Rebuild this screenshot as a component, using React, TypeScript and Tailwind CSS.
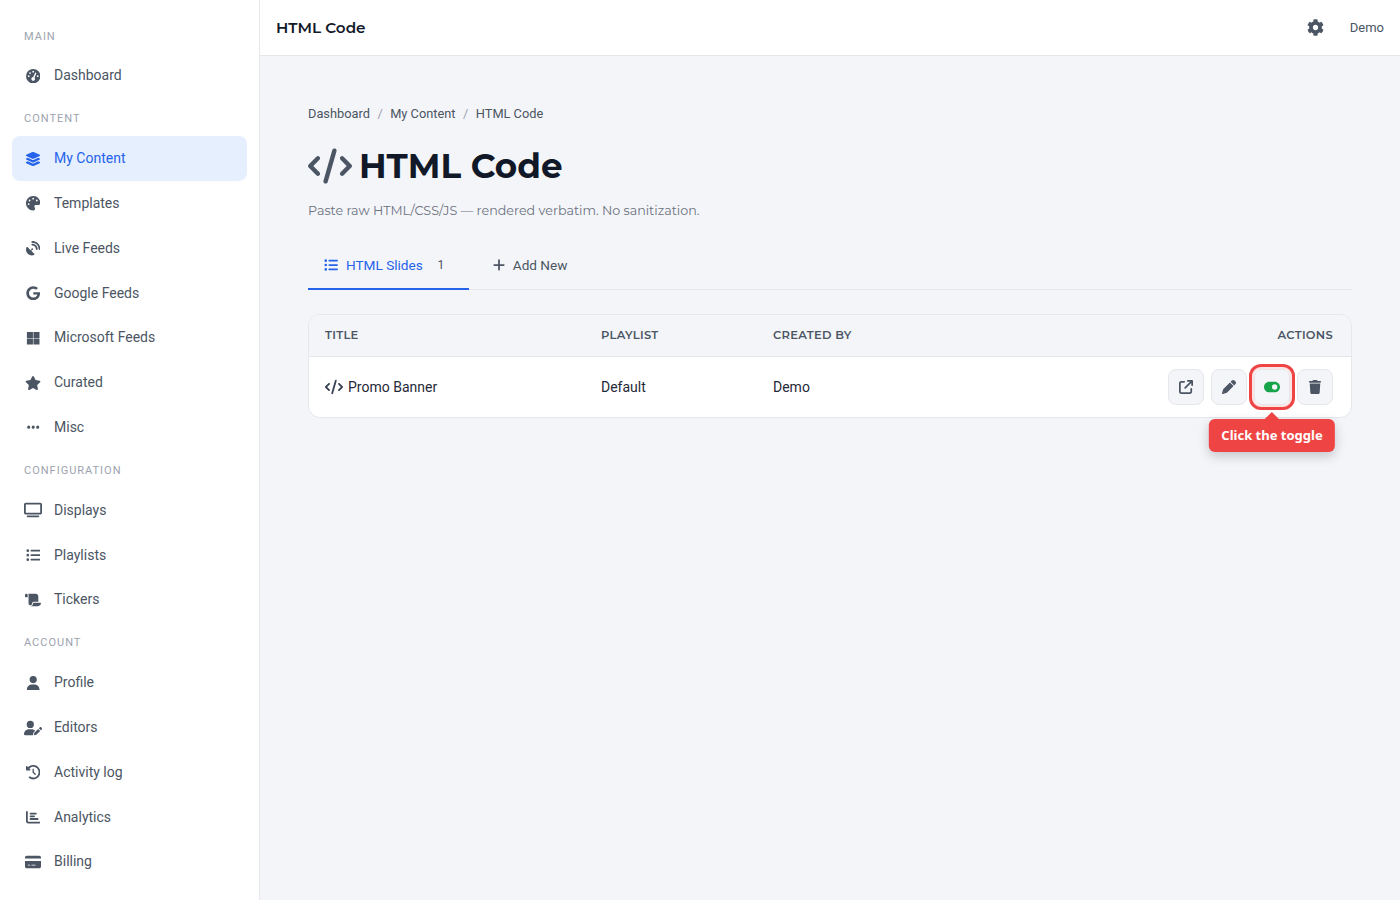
import { ReactNode } from 'react'
import { IconType } from 'react-icons'
import { FaCog } from 'react-icons/fa'
import {
  FaArrowUpRightFromSquare,
  FaChartBar,
  FaCircleQuestion,
  FaClockRotateLeft,
  FaCode,
  FaCreditCard,
  FaEllipsis,
  FaGaugeHigh,
  FaGoogle,
  FaLayerGroup,
  FaListUl,
  FaMicrosoft,
  FaPalette,
  FaPen,
  FaPlus,
  FaSatelliteDish,
  FaScroll,
  FaStar,
  FaToggleOn,
  FaTrash,
  FaTv,
  FaUser,
  FaUserPen,
} from 'react-icons/fa6'

const heading = "font-['Montserrat','Inter','Liberation_Sans',sans-serif]"

// size: react-icons fits wide glyphs into a 1em box, so wide ones get more
type NavItem = { label: string; icon: IconType; size?: number; active?: boolean }

const nav: { title: string; items: NavItem[] }[] = [
  { title: 'Main', items: [{ label: 'Dashboard', icon: FaGaugeHigh }] },
  {
    title: 'Content',
    items: [
      { label: 'My Content', icon: FaLayerGroup, size: 16, active: true },
      { label: 'Templates', icon: FaPalette },
      { label: 'Live Feeds', icon: FaSatelliteDish },
      { label: 'Google Feeds', icon: FaGoogle },
      { label: 'Microsoft Feeds', icon: FaMicrosoft },
      { label: 'Curated', icon: FaStar, size: 16 },
      { label: 'Misc', icon: FaEllipsis },
    ],
  },
  {
    title: 'Configuration',
    items: [
      { label: 'Displays', icon: FaTv, size: 18 },
      { label: 'Playlists', icon: FaListUl },
      { label: 'Tickers', icon: FaScroll, size: 16 },
    ],
  },
  {
    title: 'Account',
    items: [
      { label: 'Profile', icon: FaUser },
      { label: 'Editors', icon: FaUserPen, size: 18 },
      { label: 'Activity log', icon: FaClockRotateLeft },
      { label: 'Analytics', icon: FaChartBar },
      { label: 'Billing', icon: FaCreditCard, size: 16 },
      // next row is cut by the window, only the top of its icon shows
      { label: '', icon: FaCircleQuestion },
    ],
  },
]

function Sidebar() {
  return (
    <aside className="w-[260px] shrink-0 h-screen overflow-hidden bg-white border-r border-[#e5e7eb] px-3 pt-[15.6px]">
      {nav.map((section) => (
        <div key={section.title}>
          <div className="pl-3 pt-3 pb-2 h-[38px] text-[11px] leading-[18px] uppercase tracking-[1px] text-[#9ca3af]">
            {section.title}
          </div>
          {section.items.map((item) => (
            <div
              key={item.label}
              className={`flex items-center h-[44.8px] w-[235px] rounded-lg px-3 text-[14px] ${
                item.active ? 'bg-[#e6effe] text-[#2563eb]' : 'text-[#4b5563]'
              }`}
            >
              <span className="w-[18px] mr-3 flex justify-center">
                <item.icon size={item.size ?? 14.4} />
              </span>
              {item.label}
            </div>
          ))}
        </div>
      ))}
    </aside>
  )
}

function Topbar() {
  return (
    <header className="h-14 shrink-0 bg-white border-b border-[#e5e7eb] flex items-center justify-between pl-4 pr-4">
      <div className={`${heading} pt-0.5 text-[15.2px] font-semibold text-[#111827]`}>HTML Code</div>
      <div className="flex items-center gap-[26px]">
        <FaCog size={17} className="text-[#4b5563]" />
        <span className="text-[13px] text-[#4b5563]">Demo</span>
      </div>
    </header>
  )
}

function ActionButton({ children }: { children: ReactNode }) {
  return (
    <button className="w-9 h-9 flex items-center justify-center rounded-lg border border-[#e5e7eb] bg-[#f4f5f9] text-[#4b5563]">
      {children}
    </button>
  )
}

function Table() {
  const headCell = `${heading} text-[11.5px] font-semibold uppercase tracking-[0.3px] text-[#4b5563]`
  return (
    <div className="mt-6 bg-white border border-[#e5e7eb] rounded-xl">
      <div className="h-[42px] flex items-center px-4 bg-[#f4f5f9] border-b border-[#e5e7eb] rounded-t-xl">
        <div className={`w-[276px] ${headCell}`}>Title</div>
        <div className={`w-[172px] ${headCell}`}>Playlist</div>
        <div className={`flex-1 ${headCell}`}>Created by</div>
        <div className={`pr-0.5 ${headCell}`}>Actions</div>
      </div>
      <div className="h-[60px] flex items-center px-4 text-[14px] text-[#1f2937]">
        <div className="w-[276px] flex items-center gap-[5px]">
          <FaCode size={18} className="text-[#374151]" />
          Promo Banner
        </div>
        <div className="w-[172px]">Default</div>
        <div className="flex-1">Demo</div>
        <div className="flex items-center gap-[7px] pr-0.5">
          <ActionButton>
            <FaArrowUpRightFromSquare size={14} />
          </ActionButton>
          <ActionButton>
            <FaPen size={14} />
          </ActionButton>
          <div className="relative">
            <ActionButton>
              <FaToggleOn size={16} className="text-[#16a34a]" />
            </ActionButton>
            <div className="absolute -inset-x-[5px] -inset-y-[5px] rounded-xl border-[3px] border-[#ef4444] shadow-[inset_0_0_0_2px_rgba(239,68,68,0.15)]" />
            <div className="absolute top-[50px] left-1/2 -translate-x-1/2 bg-[#ef4444] text-white rounded-md px-[12.5px] h-[33px] flex items-center whitespace-nowrap text-[13px] font-bold font-['Noto_Sans',sans-serif] shadow-[0_4px_12px_rgba(0,0,0,0.2)]">
              <span className="absolute -top-[5px] left-1/2 -ml-[5px] w-2.5 h-2.5 rotate-45 bg-[#ef4444]" />
              <span className="relative">Click the toggle</span>
            </div>
          </div>
          <ActionButton>
            <FaTrash size={14} />
          </ActionButton>
        </div>
      </div>
    </div>
  )
}

export default function App() {
  return (
    <div className="flex h-screen overflow-hidden bg-[#f4f5f9] font-['Roboto',sans-serif]">
      <Sidebar />
      <div className="flex-1 flex flex-col min-w-0">
        <Topbar />
        <main className="px-12 pt-12">
          <div className="flex items-center h-[20px] text-[12.8px] text-[#4b5563]">
            <span>Dashboard</span>
            <span className="mx-[7.5px] text-[#9ca3af]">/</span>
            <span>My Content</span>
            <span className="mx-[7.5px] text-[#9ca3af]">/</span>
            <span>HTML Code</span>
          </div>
          <h1 className={`${heading} mt-[18px] flex items-center gap-[7px] text-[34.2px] leading-[48px] font-bold text-[#111827]`}>
            <FaCode size={44} className="text-[#4b5563] shrink-0" />
            HTML Code
          </h1>
          <p className={`${heading} mt-[11px] text-[12.7px] leading-[20px] text-[#6b7280]`}>
            Paste raw HTML/CSS/JS — rendered verbatim. No sanitization.
          </p>
          <div className="mt-[21px] flex border-b border-[#e5e7eb]">
            <div className="h-[48px] -mb-px flex items-center pl-4 pr-[18px] text-[13.6px] border-b-2 border-[#2563eb] text-[#2563eb]">
              <FaListUl size={14} className="mr-2" />
              HTML Slides
              <span className="ml-2 w-5 h-5 rounded-full bg-[#f4f5f9] text-[12px] flex items-center justify-center text-[#4b5563]">
                1
              </span>
            </div>
            <div className="ml-[7px] h-[48px] -mb-px flex items-center px-4 text-[13.6px] border-b-2 border-transparent text-[#4b5563]">
              <FaPlus size={14} className="mr-[7px]" />
              Add New
            </div>
          </div>
          <Table />
        </main>
      </div>
    </div>
  )
}
